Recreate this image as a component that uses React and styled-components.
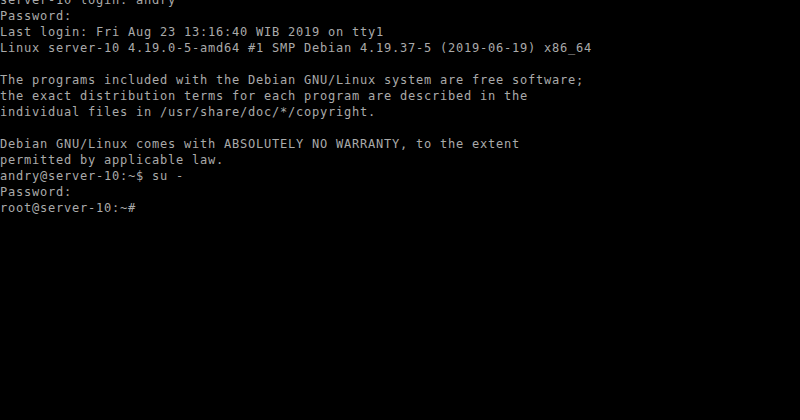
import React from "react";
import styled, { createGlobalStyle } from "styled-components";

const Global = createGlobalStyle`
  html, body { margin: 0; padding: 0; background: #000; }
  body { width: 800px; height: 420px; overflow: hidden; }
`;

const Screen = styled.div`
  width: 800px;
  height: 420px;
  background: #000;
  overflow: hidden;
`;

const Console = styled.pre`
  margin: -8px 0 0 0;
  padding: 0;
  font-family: "DejaVu Sans Mono", "Liberation Mono", monospace;
  font-size: 12px;
  letter-spacing: 0.776px;
  line-height: 16px;
  color: #aaaaaa;
  white-space: pre;
`;

const lines = [
  "server-10 login: andry",
  "Password:",
  "Last login: Fri Aug 23 13:16:40 WIB 2019 on tty1",
  "Linux server-10 4.19.0-5-amd64 #1 SMP Debian 4.19.37-5 (2019-06-19) x86_64",
  "",
  "The programs included with the Debian GNU/Linux system are free software;",
  "the exact distribution terms for each program are described in the",
  "individual files in /usr/share/doc/*/copyright.",
  "",
  "Debian GNU/Linux comes with ABSOLUTELY NO WARRANTY, to the extent",
  "permitted by applicable law.",
  "andry@server-10:~$ su -",
  "Password:",
  "root@server-10:~#",
];

export default function App() {
  return (
    <Screen>
      <Global />
      <Console>{lines.join("\n")}</Console>
    </Screen>
  );
}
